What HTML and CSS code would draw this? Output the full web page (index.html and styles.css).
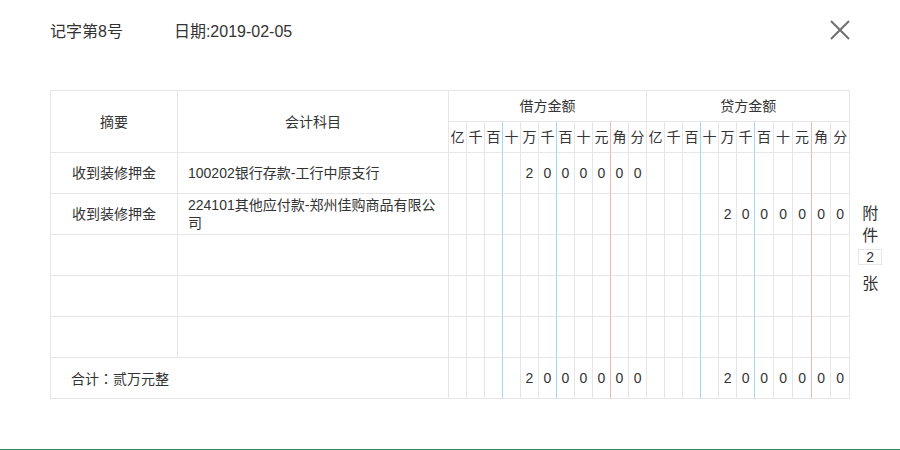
FILE: index.html
```html
<!DOCTYPE html>
<html lang="zh-CN">
<head>
<meta charset="utf-8">
<title>凭证</title>
<link rel="stylesheet" href="styles.css">
</head>
<body>
<div class="dialog">
  <div class="head">
    <span class="no">记字第8号</span>
    <span class="date">日期:2019-02-05</span>
    <button class="close" aria-label="关闭">
      <svg width="20" height="20" viewBox="0 0 20 20"><path d="M1 1L19 19M19 1L1 19" stroke="#6f6f6f" stroke-width="2" fill="none"/></svg>
    </button>
  </div>
  <div class="body">
    <table class="voucher">
      <colgroup>
        <col class="c-zy"><col class="c-km">
        <col class="c-d"><col class="c-d"><col class="c-d"><col class="c-d"><col class="c-d"><col class="c-d"><col class="c-d"><col class="c-d"><col class="c-d"><col class="c-d"><col class="c-d">
        <col class="c-d"><col class="c-d"><col class="c-d"><col class="c-d"><col class="c-d"><col class="c-d"><col class="c-w"><col class="c-w"><col class="c-w"><col class="c-w"><col class="c-w">
      </colgroup>
      <thead>
        <tr class="h1">
          <th rowspan="2">摘要</th>
          <th rowspan="2">会计科目</th>
          <th colspan="11">借方金额</th>
          <th colspan="11">贷方金额</th>
        </tr>
        <tr class="h2">
          <th>亿</th><th>千</th><th class="bl">百</th><th>十</th><th>万</th><th class="bl">千</th><th>百</th><th>十</th><th class="rd">元</th><th>角</th><th>分</th>
          <th>亿</th><th>千</th><th class="bl">百</th><th>十</th><th>万</th><th class="bl">千</th><th>百</th><th>十</th><th class="rd">元</th><th>角</th><th>分</th>
        </tr>
      </thead>
      <tbody>
        <tr>
          <td class="zy">收到装修押金</td>
          <td class="km">100202银行存款-工行中原支行</td>
          <td></td><td></td><td class="bl"></td><td></td><td>2</td><td class="bl">0</td><td>0</td><td>0</td><td class="rd">0</td><td>0</td><td>0</td>
          <td></td><td></td><td class="bl"></td><td></td><td></td><td class="bl"></td><td></td><td></td><td class="rd"></td><td></td><td></td>
        </tr>
        <tr>
          <td class="zy">收到装修押金</td>
          <td class="km">224101其他应付款-郑州佳购商品有限公司</td>
          <td></td><td></td><td class="bl"></td><td></td><td></td><td class="bl"></td><td></td><td></td><td class="rd"></td><td></td><td></td>
          <td></td><td></td><td class="bl"></td><td></td><td>2</td><td class="bl">0</td><td>0</td><td>0</td><td class="rd">0</td><td>0</td><td>0</td>
        </tr>
        <tr>
          <td class="zy"></td><td class="km"></td>
          <td></td><td></td><td class="bl"></td><td></td><td></td><td class="bl"></td><td></td><td></td><td class="rd"></td><td></td><td></td>
          <td></td><td></td><td class="bl"></td><td></td><td></td><td class="bl"></td><td></td><td></td><td class="rd"></td><td></td><td></td>
        </tr>
        <tr>
          <td class="zy"></td><td class="km"></td>
          <td></td><td></td><td class="bl"></td><td></td><td></td><td class="bl"></td><td></td><td></td><td class="rd"></td><td></td><td></td>
          <td></td><td></td><td class="bl"></td><td></td><td></td><td class="bl"></td><td></td><td></td><td class="rd"></td><td></td><td></td>
        </tr>
        <tr>
          <td class="zy"></td><td class="km"></td>
          <td></td><td></td><td class="bl"></td><td></td><td></td><td class="bl"></td><td></td><td></td><td class="rd"></td><td></td><td></td>
          <td></td><td></td><td class="bl"></td><td></td><td></td><td class="bl"></td><td></td><td></td><td class="rd"></td><td></td><td></td>
        </tr>
        <tr>
          <td class="total" colspan="2">合计<span class="colon" lang="zh-TW">：</span>贰万元整</td>
          <td></td><td></td><td class="bl"></td><td></td><td>2</td><td class="bl">0</td><td>0</td><td>0</td><td class="rd">0</td><td>0</td><td>0</td>
          <td></td><td></td><td class="bl"></td><td></td><td>2</td><td class="bl">0</td><td>0</td><td>0</td><td class="rd">0</td><td>0</td><td>0</td>
        </tr>
      </tbody>
    </table>
    <div class="attach">
      <span class="ch">附</span>
      <span class="ch">件</span>
      <span class="count">2</span>
      <span class="ch zhang">张</span>
    </div>
  </div>
</div>
</body>
</html>
```

FILE: styles.css
```css
* { box-sizing: border-box; }
html, body { margin: 0; padding: 0; background: #fff; }
body {
  font-family: "Liberation Sans", "Noto Sans CJK SC", sans-serif;
  color: #333;
}
.dialog {
  width: 900px;
  height: 450px;
  border-bottom: 1px solid #2f8a60;
  padding: 20px 0 0 50px;
}
.head {
  display: flex;
  align-items: flex-start;
  height: 24px;
  width: 800px;
  font-size: 16px;
  line-height: 24px;
}
.date { margin-left: 51px; }
.close {
  margin-left: auto;
  width: 20px;
  height: 20px;
  padding: 0;
  border: 0;
  background: none;
  display: block;
}
.close svg { display: block; }
.body {
  display: flex;
  align-items: flex-start;
  margin-top: 46px;
}
.voucher {
  table-layout: fixed;
  border-collapse: separate;
  border-spacing: 0;
  border-top: 1px solid #e6e6e6;
  border-left: 1px solid #e6e6e6;
  width: 800px;
  font-size: 14px;
  color: #333;
}
.c-zy { width: 127px; }
.c-km { width: 271px; }
.c-d { width: 18px; }
.c-w { width: 19px; }
.voucher th, .voucher td {
  border-right: 1px solid #e6e6e6;
  border-bottom: 1px solid #e6e6e6;
  padding: 0;
  text-align: center;
  font-weight: normal;
  line-height: 18px;
}
.h1 th { height: 31px; }
.h2 th { height: 31px; }
.voucher td { height: 41px; }
.voucher .bl { border-right-color: #a6d6f6; }
.voucher .rd { border-right-color: #f2b6b6; }
.voucher td.km { text-align: left; padding: 0 10px; }
.voucher td.total { text-align: left; padding-left: 20px; }
.colon { font-family: "Noto Sans CJK TC", sans-serif; }
.attach {
  width: 40px;
  padding-top: 113px;
  display: flex;
  flex-direction: column;
  align-items: center;
  font-size: 16px;
  line-height: 22px;
  color: #333;
}
.count {
  margin-top: 2px;
  width: 24px;
  height: 16px;
  border: 1px solid #e6e6e6;
  font-size: 14px;
  line-height: 14px;
  text-align: center;
}
.zhang { margin-top: 8px; }
```
